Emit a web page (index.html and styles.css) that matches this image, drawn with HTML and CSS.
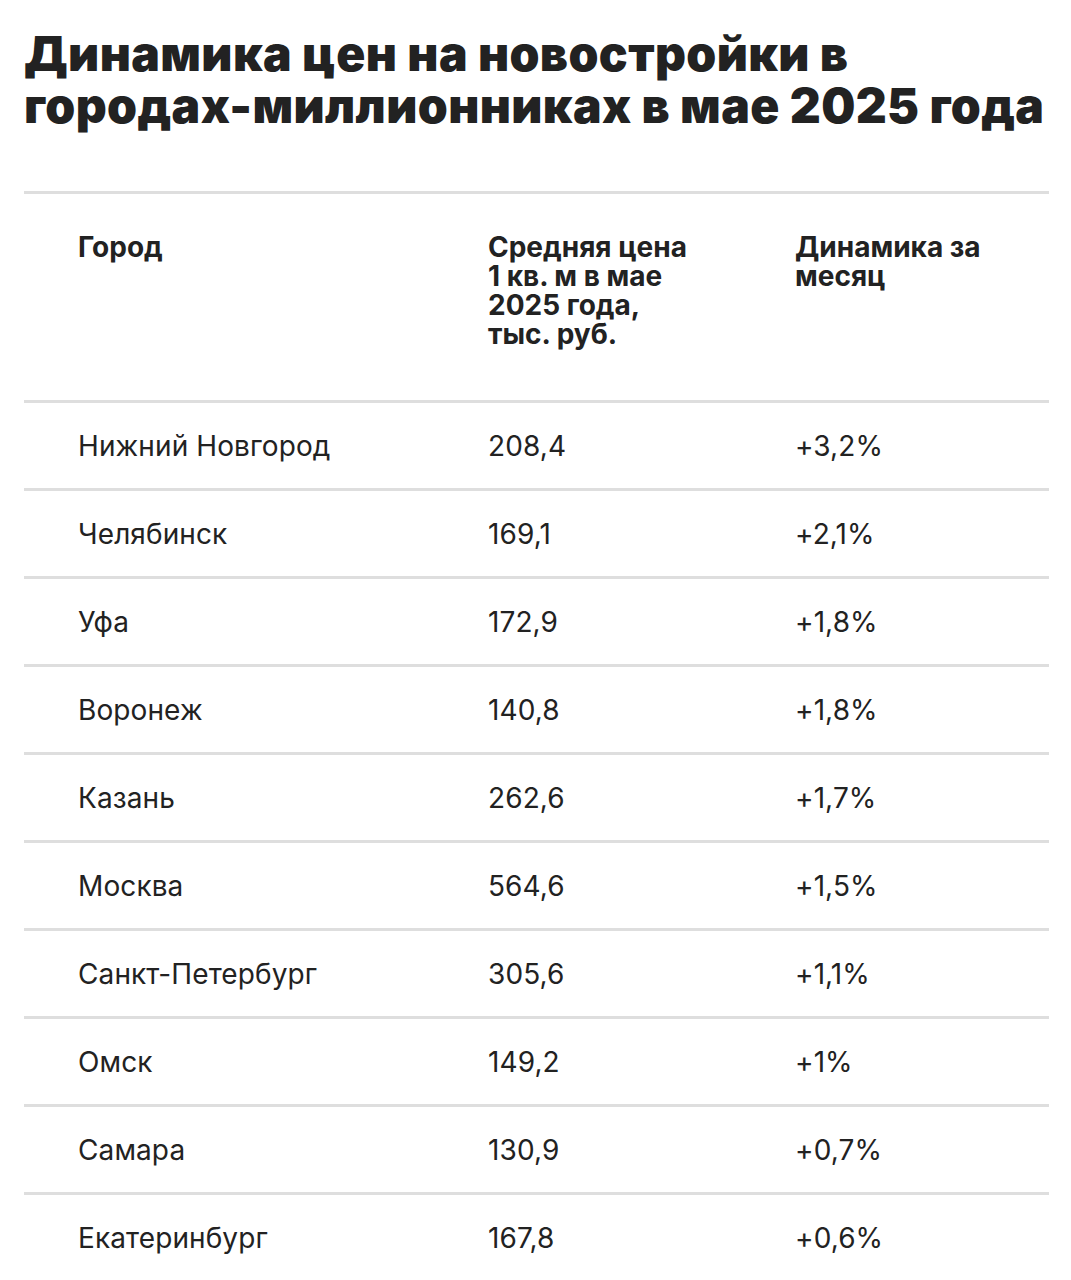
FILE: index.html
```html
<!DOCTYPE html>
<html lang="ru">
<head>
<meta charset="utf-8">
<link rel="stylesheet" href="styles.css">
</head>
<body>
<main class="page">
  <h1 class="title">Динамика цен на новостройки в городах-миллионниках в мае 2025 года</h1>
  <div class="table">
    <div class="row head">
      <div class="cell">Город</div>
      <div class="cell">Средняя цена<br>1 кв. м в мае<br>2025 года,<br>тыс. руб.</div>
      <div class="cell">Динамика за<br>месяц</div>
    </div>
    <div class="row"><div class="cell">Нижний Новгород</div><div class="cell">208,4</div><div class="cell">+3,2%</div></div>
    <div class="row"><div class="cell">Челябинск</div><div class="cell">169,1</div><div class="cell">+2,1%</div></div>
    <div class="row"><div class="cell">Уфа</div><div class="cell">172,9</div><div class="cell">+1,8%</div></div>
    <div class="row"><div class="cell">Воронеж</div><div class="cell">140,8</div><div class="cell">+1,8%</div></div>
    <div class="row"><div class="cell">Казань</div><div class="cell">262,6</div><div class="cell">+1,7%</div></div>
    <div class="row"><div class="cell">Москва</div><div class="cell">564,6</div><div class="cell">+1,5%</div></div>
    <div class="row"><div class="cell">Санкт-Петербург</div><div class="cell">305,6</div><div class="cell">+1,1%</div></div>
    <div class="row"><div class="cell">Омск</div><div class="cell">149,2</div><div class="cell">+1%</div></div>
    <div class="row"><div class="cell">Самара</div><div class="cell">130,9</div><div class="cell">+0,7%</div></div>
    <div class="row"><div class="cell">Екатеринбург</div><div class="cell">167,8</div><div class="cell">+0,6%</div></div>
  </div>
</main>
</body>
</html>
```

FILE: styles.css
```css
html, body {
  margin: 0;
  padding: 0;
  background: #fff;
}
body {
  font-family: Inter, "Noto Sans", "Liberation Sans", sans-serif;
  color: #222;
}
.page {
  padding: 28px 22px 0 24px;
}
.title {
  margin: 0;
  font-size: 48px;
  line-height: 52px;
  font-weight: 900;
  letter-spacing: 0.4px;
  color: #222;
}
.table {
  margin-top: 59px;
}
.row {
  display: grid;
  grid-template-columns: 410px 307px 1fr;
  padding-left: 54px;
  border-top: 3px solid #dedede;
  height: 85px;
  align-items: center;
  font-size: 28px;
  line-height: 32px;
  font-weight: 400;
  letter-spacing: 0.1px;
}
.row.head {
  height: 209px;
  align-items: start;
  box-sizing: border-box;
  padding-top: 39px;
  font-size: 28px;
  line-height: 29px;
  font-weight: 700;
  letter-spacing: 0;
}
```
